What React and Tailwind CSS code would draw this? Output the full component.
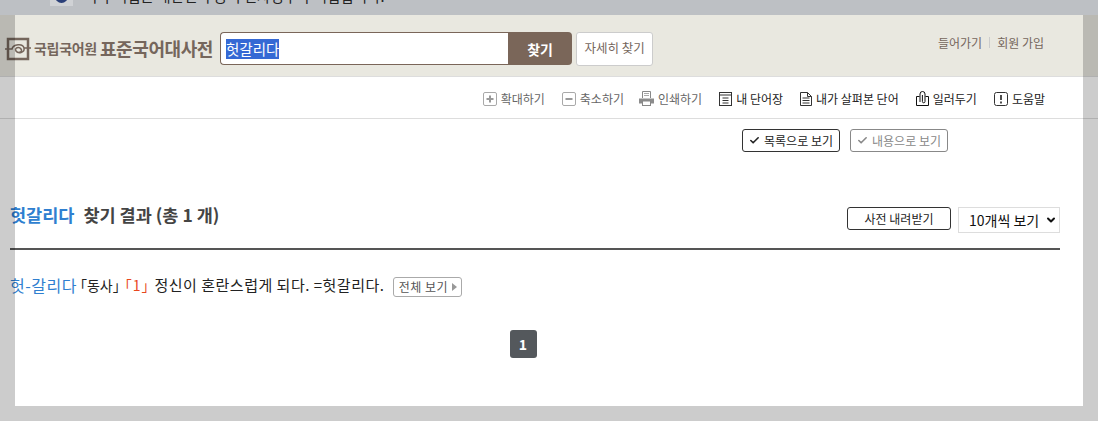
import { Check, ChevronDown } from 'lucide-react';

const kr = "font-['Noto_Sans_CJK_KR','Noto_Sans',sans-serif]";

function BoxIcon({ minus }) {
  return (
    <svg width="14" height="14" viewBox="0 0 14 14" className="shrink-0">
      <rect x="0.5" y="0.5" width="13" height="13" rx="1.5" fill="#fff" stroke="#a9a9a9" />
      <path d="M3.5 7h7" stroke="#999" strokeWidth="2" />
      {!minus && <path d="M7 3.5v7" stroke="#999" strokeWidth="2" />}
    </svg>
  );
}

function PrintIcon() {
  return (
    <svg width="15" height="15" viewBox="0 0 15 15" className="shrink-0">
      <path d="M3.500 7V.5h8V7" fill="#fff" stroke="#888" />
      <path d="M5 2.500h5M5 4.500h5" stroke="#aaa" />
      <path d="M0 7.500h15v5H0z" fill="#8c8c8c" />
      <rect x="3.500" y="10" width="8" height="4.500" fill="#fff" stroke="#888" />
    </svg>
  );
}

function ListIcon() {
  return (
    <svg width="13" height="14" viewBox="0 0 13 14" className="shrink-0">
      <rect x="0.5" y="0.5" width="12" height="13" fill="#fff" stroke="#333" />
      <path d="M0.5 3h12M3.500 6h6M3.500 8.500h6M3.500 11h6" stroke="#333" />
    </svg>
  );
}

function DocIcon() {
  return (
    <svg width="12" height="14" viewBox="0 0 12 14" className="shrink-0">
      <path d="M.5.5h7l4 4v9H.5z" fill="#fff" stroke="#333" />
      <path d="M7.500.5v4h4M2.500 6h7M2.500 8.500h7M2.500 11h7" fill="none" stroke="#333" />
    </svg>
  );
}

function ClipIcon() {
  return (
    <svg width="13" height="15" viewBox="0 0 13 15" className="shrink-0">
      <path d="M3.500 5.500H.5v9h12v-9h-3" fill="#fff" stroke="#111" />
      <path d="M4 11V3a2.500 2.500 0 0 1 5 0v7.500a1.300 1.300 0 0 1-2.600 0V4" fill="#fff" stroke="#111" />
    </svg>
  );
}

function HelpIcon() {
  return (
    <svg width="14" height="14" viewBox="0 0 14 14" className="shrink-0">
      <rect x="0.5" y="0.5" width="13" height="13" rx="2" fill="#fff" stroke="#333" />
      <path d="M7 3v5M7 9.500v2" stroke="#222" strokeWidth="1.600" />
    </svg>
  );
}

function Logo() {
  return (
    <svg width="26" height="24" viewBox="0 0 26 24" className="shrink-0">
      <rect x="3" y="2" width="20" height="20" fill="none" stroke="#75665c" strokeWidth="2.500" />
      <path d="M0 12h7c1-5 11-6 12-1s-6 6-8 3 3-5 5-2-2 4-4 3M19 11h7" fill="none" stroke="#75665c" strokeWidth="1.500" />
    </svg>
  );
}

function ToolItem({ icon, label, muted, className = '' }) {
  return (
    <span className={`flex items-center gap-1 text-xs ${muted ? 'text-[#666]' : 'text-[#222]'} ${className}`}>
      {icon}
      {label}
    </span>
  );
}

function ViewButton({ label, active }) {
  return (
    <button className={`flex items-center justify-center gap-1 w-[98px] h-[23px] bg-white rounded-[3px] border text-xs ${active ? 'border-[#333] text-[#222]' : 'border-[#888] text-[#888]'}`}>
      <Check size={11} strokeWidth={3.5} />
      {label}
    </button>
  );
}

export default function App() {
  return (
    <div className={`relative h-[421px] w-[1098px] overflow-hidden bg-white ${kr}`}>
      <div className="h-[15px] overflow-hidden bg-[#bdc0c4]">
        <div className="flex items-center -mt-[14px] ml-[50px] gap-[11px] text-[14.500px] text-[#222] h-[20px]">
          <span className="flex items-center justify-center w-[23px] h-[20px] bg-[#d0d2d5]">
            <span className="w-[13px] h-[13px] rounded-full bg-[#2a3f78]" />
          </span>
          이 누리집은 대한민국 공식 전자정부 누리집입니다.
        </div>
      </div>

      <header className="flex items-center h-[62px] pt-[6px] pl-[5px] bg-[#e9e8e0] border-b border-[#ddd]">
        <Logo />
        <span className="ml-[3px] text-[14px] font-bold text-[#75665c] tracking-[-0.3px]">국립국어원</span>
        <span className="ml-[3px] text-[18px] font-bold text-[#75665c] tracking-[-0.4px]">표준국어대사전</span>
        <div className="flex ml-[7px] w-[352px] h-[33px]">
          <div className="flex-1 flex items-center pl-[5px] bg-white border border-r-0 border-[#7a6659] rounded-l-[4px]">
            <span className="bg-[#3569d4] text-white text-[14.500px] leading-[20px]">헛갈리다</span>
          </div>
          <button className="w-[64px] bg-[#7a6659] rounded-r-[4px] text-white text-sm font-bold">찾기</button>
        </div>
        <button className="ml-[4px] w-[77px] h-[34px] bg-white border border-[#ccc] rounded-[3px] text-[12.500px] text-[#75665c]">자세히 찾기</button>
        <nav className="flex items-center ml-auto mr-[54px] -mt-[12px] text-xs text-[#75665c]">
          들어가기
          <span className="w-px h-[11px] mx-[7px] bg-[#ccc]" />
          회원 가입
        </nav>
      </header>

      <div className="flex items-center justify-end gap-[17px] h-[42px] pt-[2px] pr-[53px] border-b border-[#ddd]">
        <ToolItem muted icon={<BoxIcon />} label="확대하기" />
        <ToolItem muted icon={<BoxIcon minus />} label="축소하기" />
        <ToolItem muted icon={<PrintIcon />} label="인쇄하기" className="-ml-[2px]" />
        <ToolItem icon={<ListIcon />} label="내 단어장" />
        <ToolItem icon={<DocIcon />} label="내가 살펴본 단어" />
        <ToolItem icon={<ClipIcon />} label="일러두기" />
        <ToolItem icon={<HelpIcon />} label="도움말" />
      </div>

      <main className="px-[10px] w-[1070px]">
        <div className="flex justify-end gap-[10px] pt-[10px] pr-[112px]">
          <ViewButton active label="목록으로 보기" />
          <ViewButton label="내용으로 보기" />
        </div>

        <div className="flex items-start justify-between mt-[55px] h-[41px] border-b-2 border-[#555] box-content">
          <h2 className="text-[17.500px] font-bold leading-[17px] -mt-[1px] text-[#444]">
            <span className="text-[#2f7fd0]">헛갈리다</span>
            <span className="ml-[9px]">찾기 결과 (총 1 개)</span>
          </h2>
          <div className="flex gap-[7px]">
            <button className="w-[104px] h-[23px] bg-white border border-[#333] rounded-[3px] text-xs text-[#222]">사전 내려받기</button>
            <div className="flex items-center justify-between w-[102px] h-[26px] pl-[10px] pr-[2px] bg-white border border-[#ddd] text-sm text-[#111]">
              <span className="-mt-[1px]">10개씩 보기</span>
              <ChevronDown size={12} strokeWidth={4} />
            </div>
          </div>
        </div>

        <div className="flex items-center mt-[23px] h-[24px] text-[15px] text-[#222]">
          <span className="text-[#2f7fd0] text-base tracking-[0.5px]">헛-갈리다</span>
          <span className="ml-[3px] text-sm [font-feature-settings:'halt']">「동사」</span>
          <span className="ml-[5px] text-[#e8471e] text-sm tracking-[1px] [font-feature-settings:'halt']">「1」</span>
          <span className="ml-[5px] tracking-[0.5px]">정신이 혼란스럽게 되다. =헛갈리다.</span>
          <button className="flex items-center justify-center gap-[4px] mt-[3px] ml-[9px] w-[69px] h-[20px] bg-white border border-[#aaa] rounded-[3px] text-xs tracking-[0.5px] text-[#555]">
            전체 보기
            <span className="w-0 h-0 border-y-[4px] border-y-transparent border-l-[5px] border-l-[#999]" />
          </button>
        </div>

        <div className="flex justify-center mt-[33px] pr-[24px]">
          <span className="flex items-center justify-center w-[27px] h-[28px] bg-[#54585c] rounded-[3px] text-white text-sm font-bold">1</span>
        </div>
      </main>

      <div className="absolute left-0 top-[15px] bottom-0 w-[15px] bg-black/20" />
      <div className="absolute right-0 top-[15px] bottom-0 w-[15px] bg-black/20" />
      <div className="absolute left-[15px] right-[15px] bottom-0 h-[15px] bg-black/20" />
    </div>
  );
}
